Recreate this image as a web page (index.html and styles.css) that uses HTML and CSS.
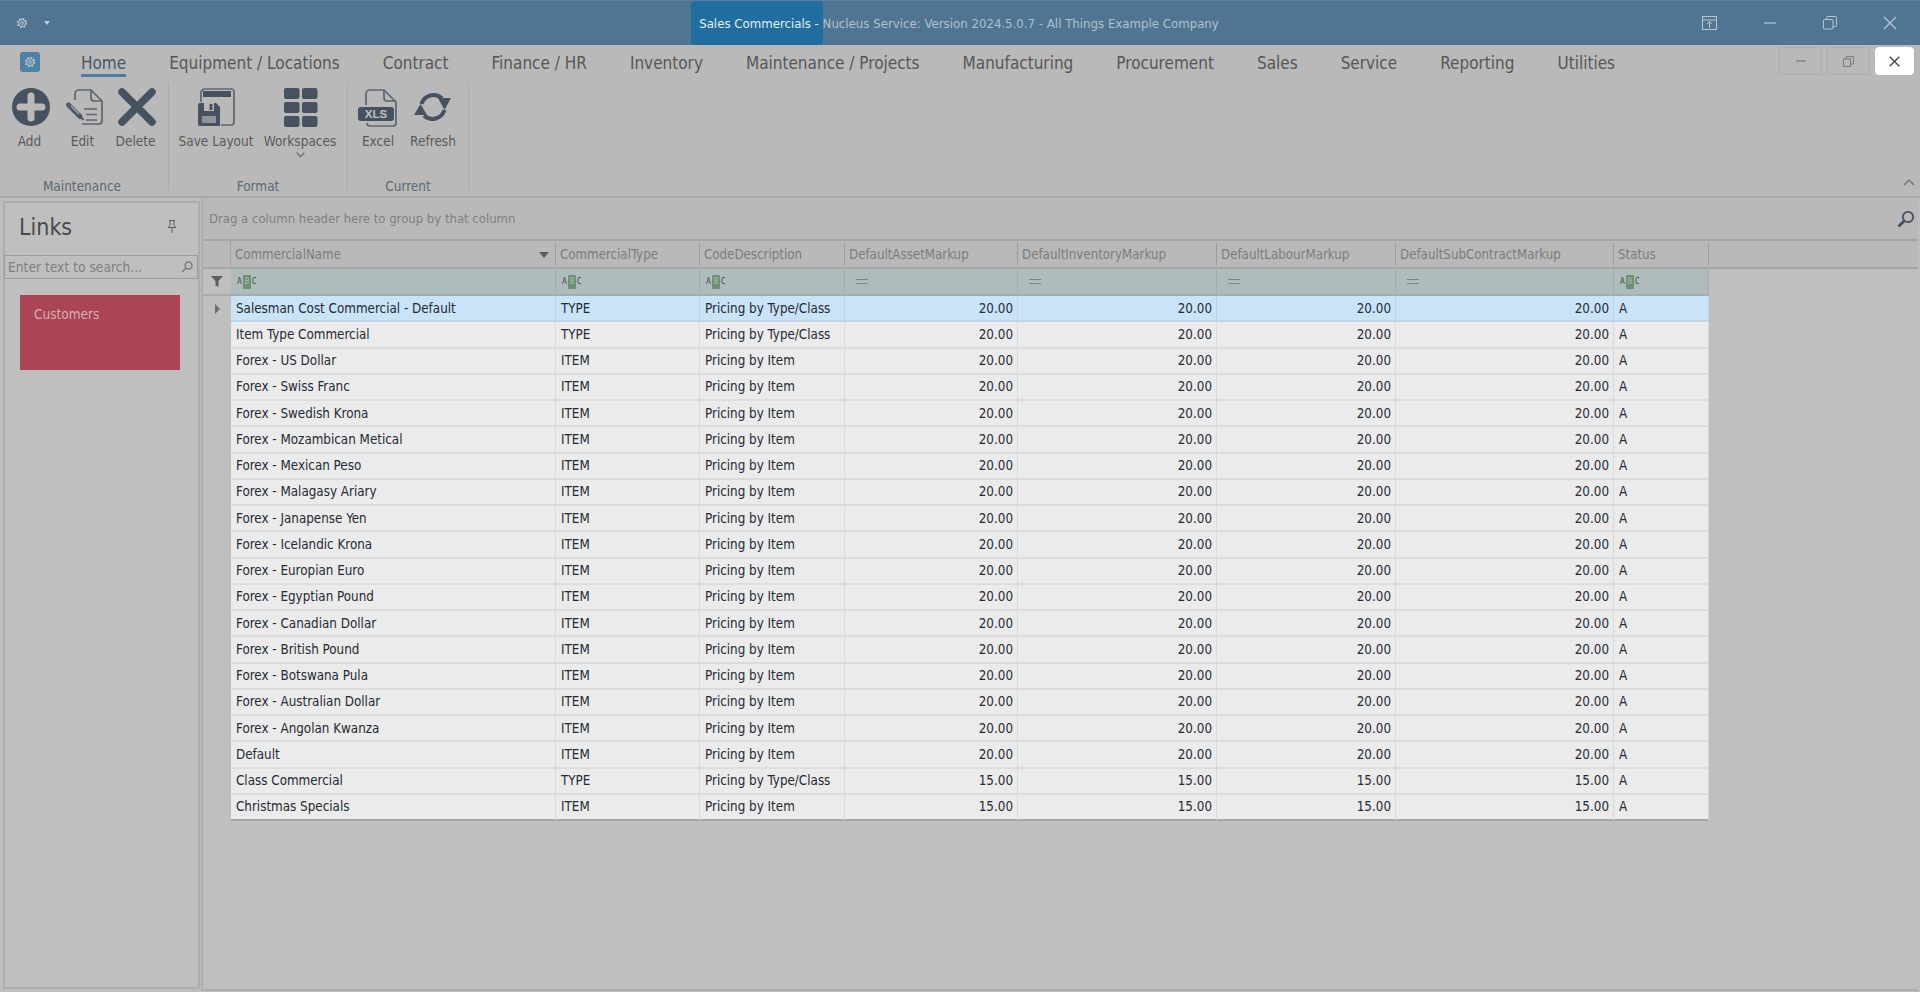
FILE: index.html
```html
<!DOCTYPE html>
<html lang="en">
<head>
<meta charset="utf-8">
<title>Sales Commercials</title>
<link rel="stylesheet" href="styles.css">
</head>
<body>
<svg class="defs" width="0" height="0" aria-hidden="true">
  <defs>
    <symbol id="gear" viewBox="0 0 20 20">
      <g fill="none" stroke="currentColor">
        <circle cx="10" cy="10" r="6.2" stroke-width="2.6" stroke-dasharray="2.4 2.46"/>
        <circle cx="10" cy="10" r="5" stroke-width="1.4"/>
        <circle cx="10" cy="10" r="2" stroke-width="1.4"/>
      </g>
    </symbol>
  </defs>
</svg>
<header class="titlebar">
  <div class="qat">
    <svg class="qat-gear"><use href="#gear"/></svg>
    <span class="qat-caret"></span>
  </div>
  <div class="title"><span class="title-active">Sales Commercials - </span><span class="title-rest">Nucleus Service: Version 2024.5.0.7 - All Things Example Company</span></div>
  <div class="winbtns">
    <span class="winbtn"><svg width="16" height="15" viewBox="0 0 16 15"><g fill="none" stroke="currentColor"><rect x=".5" y=".5" width="14" height="13"/><path d="M.5 4h14M7.5 12V6M5 8l2.5-2.5L10 8"/></g></svg></span>
    <span class="winbtn"><svg width="14" height="14" viewBox="0 0 14 14"><path d="M1 7h12" stroke="currentColor" fill="none" stroke-width="1.2"/></svg></span>
    <span class="winbtn"><svg width="14" height="14" viewBox="0 0 14 14"><g fill="none" stroke="currentColor"><rect x=".5" y="3.5" width="9.5" height="9.5" rx="1"/><path d="M3.5 3.5V1.5a1 1 0 0 1 1-1h8a1 1 0 0 1 1 1v8a1 1 0 0 1-1 1h-2.500"/></g></svg></span>
    <span class="winbtn"><svg width="14" height="14" viewBox="0 0 14 14"><path d="M1 1l12 12M13 1L1 13" stroke="currentColor" fill="none" stroke-width="1.2"/></svg></span>
  </div>
</header>

<section class="ribbon">
  <div class="tabrow">
    <span class="appicon"><svg class="app-gear"><use href="#gear"/></svg></span>
    <nav class="tabs">
      <span class="tab tab-on">Home</span>
      <span class="tab">Equipment / Locations</span>
      <span class="tab">Contract</span>
      <span class="tab">Finance / HR</span>
      <span class="tab">Inventory</span>
      <span class="tab">Maintenance / Projects</span>
      <span class="tab">Manufacturing</span>
      <span class="tab">Procurement</span>
      <span class="tab">Sales</span>
      <span class="tab">Service</span>
      <span class="tab">Reporting</span>
      <span class="tab">Utilities</span>
    </nav>
    <div class="mdi">
      <span class="mdibtn mdi-min"><svg width="10" height="2" viewBox="0 0 10 2"><path d="M0 1h10" stroke="currentColor" stroke-width="1.300"/></svg></span>
      <span class="mdibtn mdi-res"><svg width="11" height="11" viewBox="0 0 11 11"><g fill="none" stroke="currentColor"><rect x=".5" y="3" width="7" height="7.500"/><path d="M3 3V.5h7.500V8H7.500"/></g></svg></span>
      <span class="mdibtn mdi-close"><svg width="11" height="11" viewBox="0 0 11 11"><path d="M.7.700l9.600 9.600M10.300.700L.7 10.300" stroke="currentColor" fill="none" stroke-width="1.400"/></svg></span>
    </div>
  </div>
  <div class="groups">
    <div class="group g-maint">
      <div class="btns">
        <div class="rbtn b-std">
          <svg class="ico" viewBox="0 0 38 38"><circle cx="19" cy="19" r="19" fill="#46525f"/><path d="M19 8v22M8 19h22" stroke="#b9b9b9" stroke-width="7" stroke-linecap="round"/></svg>
          <span>Add</span>
        </div>
        <div class="rbtn b-std">
          <svg class="ico" viewBox="0 0 38 38"><g fill="none" stroke="#5c6670" stroke-width="1.700"><path d="M10 12V6a4 4 0 0 1 4-4h12l11 11v20a3 3 0 0 1-3 3H17"/><path d="M26 2v8a3 3 0 0 0 3 3h8"/><path d="M19 21h13M21 26.500h11M21 32h11" stroke-width="1.500"/></g><path d="M3.500 17L15 28.500" stroke="#4f5a65" stroke-width="5" stroke-linecap="round"/><path d="M6 18l8 8" stroke="#a5a9ad" stroke-width="1.200"/><path d="M15 28l3.500 4" stroke="#46525f" stroke-width="1.800"/></svg>
          <span>Edit</span>
        </div>
        <div class="rbtn b-std">
          <svg class="ico" viewBox="0 0 38 38"><path d="M4 4l30 30M34 4L4 34" stroke="#46525f" stroke-width="7.500" stroke-linecap="round"/></svg>
          <span>Delete</span>
        </div>
      </div>
      <div class="glabel">Maintenance</div>
    </div>
    <div class="group g-format">
      <div class="btns">
        <div class="rbtn b-save">
          <svg class="ico" viewBox="0 0 38 38"><g fill="none" stroke="#5c6670" stroke-width="1.700"><path d="M4 14V5a4 4 0 0 1 4-4h26a3 3 0 0 1 3 3v30a3 3 0 0 1-3 3H24"/></g><path d="M6 3h28v6H6z" fill="#46525f"/><path d="M1 17a2 2 0 0 1 2-2h16l4 4v18a1 1 0 0 1-1 1H3a2 2 0 0 1-2-2z" fill="#46525f"/><path d="M7 15h10v8H7z" fill="#b9b9b9"/><path d="M5 28h14v7H5z" fill="#8d949b"/><path d="M12.500 16h3v6h-3z" fill="#46525f"/></svg>
          <span>Save Layout</span>
        </div>
        <div class="rbtn b-work">
          <svg class="ico" viewBox="0 0 38 38"><g fill="#46525f"><rect x="3" y="0" width="15.500" height="11" rx="2"/><rect x="21" y="0" width="15.500" height="11" rx="2"/><rect x="3" y="14" width="15.500" height="11" rx="2"/><rect x="21" y="14" width="15.500" height="11" rx="2"/><rect x="3" y="28" width="15.500" height="11" rx="2"/><rect x="21" y="28" width="15.500" height="11" rx="2"/></g></svg>
          <span>Workspaces</span>
          <svg class="chev" width="9" height="6" viewBox="0 0 9 6"><path d="M.7.800L4.500 4.600 8.300.800" fill="none" stroke="#6b6f73" stroke-width="1.300"/></svg>
        </div>
      </div>
      <div class="glabel">Format</div>
    </div>
    <div class="group g-cur">
      <div class="btns">
        <div class="rbtn b-xls">
          <svg class="ico" viewBox="0 0 40 38"><g fill="none" stroke="#5c6670" stroke-width="1.700"><path d="M8 17V6a4 4 0 0 1 4-4h14l12 12v21a3 3 0 0 1-3 3H12a3 3 0 0 1-3-3"/><path d="M26 2v8a3 3 0 0 0 3 3h9"/></g><rect x="0" y="19" width="36" height="14" rx="3" fill="#46525f"/><text x="18" y="30" class="xls">XLS</text></svg>
          <span>Excel</span>
        </div>
        <div class="rbtn b-ref">
          <svg class="ico" viewBox="0 0 38 38"><g fill="none" stroke="#46525f" stroke-width="4"><path d="M7.500 16A12.500 12.500 0 0 1 28 10.500"/><path d="M30.500 22A12.500 12.500 0 0 1 10 27.500"/></g><g fill="#46525f"><path d="M24 10h13l-6.500 12z"/><path d="M0 27h13L6.500 16z"/></g></svg>
          <span>Refresh</span>
        </div>
      </div>
      <div class="glabel">Current</div>
    </div>
    <svg class="collapse" width="12" height="8" viewBox="0 0 12 8"><path d="M1 7l5-5 5 5" fill="none" stroke="#777" stroke-width="1.500"/></svg>
  </div>
</section>

<main class="workspace">
  <aside class="links">
    <div class="links-head">
      <span class="links-title">Links</span>
      <svg width="10" height="13" viewBox="0 0 10 13"><path d="M2 .5h6M3 .5v5L1 7.500h8L7 5.500v-5M5 7.500V13" fill="none" stroke="#5f5f5f"/></svg>
    </div>
    <div class="links-search">
      <span>Enter text to search...</span>
      <svg width="12" height="12" viewBox="0 0 12 12"><g fill="none" stroke="#777" stroke-width="1.300"><circle cx="7.500" cy="4.500" r="3.500"/><path d="M5 7l-4 4"/></g></svg>
    </div>
    <div class="tile">Customers</div>
  </aside>

  <section class="gridpanel">
    <div class="groupbar">
      <span>Drag a column header here to group by that column</span>
      <svg width="18" height="18" viewBox="0 0 18 18"><g fill="none" stroke="#46505a"><circle cx="11" cy="7" r="5.200" stroke-width="1.800"/><path d="M7 11l-5.500 5.500" stroke-width="2.800"/></g></svg>
    </div>
    <div class="cols headrow">
      <span class="ind"></span>
      <span class="hc hc-sort">CommercialName<i class="sort"></i></span>
      <span class="hc">CommercialType</span>
      <span class="hc">CodeDescription</span>
      <span class="hc">DefaultAssetMarkup</span>
      <span class="hc">DefaultInventoryMarkup</span>
      <span class="hc">DefaultLabourMarkup</span>
      <span class="hc">DefaultSubContractMarkup</span>
      <span class="hc">Status</span>
    </div>
    <div class="cols filterrow">
      <span class="ind"><svg width="12" height="11" viewBox="0 0 12 11"><path d="M0 0h12L7.500 5v6l-3-1.500V5z" fill="#5c5f62"/></svg></span>
      <span class="fc"><span class="abc">A<b>B</b>C</span></span>
      <span class="fc"><span class="abc">A<b>B</b>C</span></span>
      <span class="fc"><span class="abc">A<b>B</b>C</span></span>
      <span class="fc"><i class="eq"></i></span>
      <span class="fc"><i class="eq"></i></span>
      <span class="fc"><i class="eq"></i></span>
      <span class="fc"><i class="eq"></i></span>
      <span class="fc"><span class="abc">A<b>B</b>C</span></span>
    </div>
    <div class="rows">
      <div class="cols row row-sel"><span class="ind"><i class="arrow"></i></span><span class="c">Salesman Cost Commercial - Default</span><span class="c">TYPE</span><span class="c">Pricing by Type/Class</span><span class="c n">20.00</span><span class="c n">20.00</span><span class="c n">20.00</span><span class="c n">20.00</span><span class="c">A</span></div>
      <div class="cols row"><span class="ind"></span><span class="c">Item Type Commercial</span><span class="c">TYPE</span><span class="c">Pricing by Type/Class</span><span class="c n">20.00</span><span class="c n">20.00</span><span class="c n">20.00</span><span class="c n">20.00</span><span class="c">A</span></div>
      <div class="cols row"><span class="ind"></span><span class="c">Forex - US Dollar</span><span class="c">ITEM</span><span class="c">Pricing by Item</span><span class="c n">20.00</span><span class="c n">20.00</span><span class="c n">20.00</span><span class="c n">20.00</span><span class="c">A</span></div>
      <div class="cols row"><span class="ind"></span><span class="c">Forex - Swiss Franc</span><span class="c">ITEM</span><span class="c">Pricing by Item</span><span class="c n">20.00</span><span class="c n">20.00</span><span class="c n">20.00</span><span class="c n">20.00</span><span class="c">A</span></div>
      <div class="cols row"><span class="ind"></span><span class="c">Forex - Swedish Krona</span><span class="c">ITEM</span><span class="c">Pricing by Item</span><span class="c n">20.00</span><span class="c n">20.00</span><span class="c n">20.00</span><span class="c n">20.00</span><span class="c">A</span></div>
      <div class="cols row"><span class="ind"></span><span class="c">Forex - Mozambican Metical</span><span class="c">ITEM</span><span class="c">Pricing by Item</span><span class="c n">20.00</span><span class="c n">20.00</span><span class="c n">20.00</span><span class="c n">20.00</span><span class="c">A</span></div>
      <div class="cols row"><span class="ind"></span><span class="c">Forex - Mexican Peso</span><span class="c">ITEM</span><span class="c">Pricing by Item</span><span class="c n">20.00</span><span class="c n">20.00</span><span class="c n">20.00</span><span class="c n">20.00</span><span class="c">A</span></div>
      <div class="cols row"><span class="ind"></span><span class="c">Forex - Malagasy Ariary</span><span class="c">ITEM</span><span class="c">Pricing by Item</span><span class="c n">20.00</span><span class="c n">20.00</span><span class="c n">20.00</span><span class="c n">20.00</span><span class="c">A</span></div>
      <div class="cols row"><span class="ind"></span><span class="c">Forex - Janapense Yen</span><span class="c">ITEM</span><span class="c">Pricing by Item</span><span class="c n">20.00</span><span class="c n">20.00</span><span class="c n">20.00</span><span class="c n">20.00</span><span class="c">A</span></div>
      <div class="cols row"><span class="ind"></span><span class="c">Forex - Icelandic Krona</span><span class="c">ITEM</span><span class="c">Pricing by Item</span><span class="c n">20.00</span><span class="c n">20.00</span><span class="c n">20.00</span><span class="c n">20.00</span><span class="c">A</span></div>
      <div class="cols row"><span class="ind"></span><span class="c">Forex - Europian Euro</span><span class="c">ITEM</span><span class="c">Pricing by Item</span><span class="c n">20.00</span><span class="c n">20.00</span><span class="c n">20.00</span><span class="c n">20.00</span><span class="c">A</span></div>
      <div class="cols row"><span class="ind"></span><span class="c">Forex - Egyptian Pound</span><span class="c">ITEM</span><span class="c">Pricing by Item</span><span class="c n">20.00</span><span class="c n">20.00</span><span class="c n">20.00</span><span class="c n">20.00</span><span class="c">A</span></div>
      <div class="cols row"><span class="ind"></span><span class="c">Forex - Canadian Dollar</span><span class="c">ITEM</span><span class="c">Pricing by Item</span><span class="c n">20.00</span><span class="c n">20.00</span><span class="c n">20.00</span><span class="c n">20.00</span><span class="c">A</span></div>
      <div class="cols row"><span class="ind"></span><span class="c">Forex - British Pound</span><span class="c">ITEM</span><span class="c">Pricing by Item</span><span class="c n">20.00</span><span class="c n">20.00</span><span class="c n">20.00</span><span class="c n">20.00</span><span class="c">A</span></div>
      <div class="cols row"><span class="ind"></span><span class="c">Forex - Botswana Pula</span><span class="c">ITEM</span><span class="c">Pricing by Item</span><span class="c n">20.00</span><span class="c n">20.00</span><span class="c n">20.00</span><span class="c n">20.00</span><span class="c">A</span></div>
      <div class="cols row"><span class="ind"></span><span class="c">Forex - Australian Dollar</span><span class="c">ITEM</span><span class="c">Pricing by Item</span><span class="c n">20.00</span><span class="c n">20.00</span><span class="c n">20.00</span><span class="c n">20.00</span><span class="c">A</span></div>
      <div class="cols row"><span class="ind"></span><span class="c">Forex - Angolan Kwanza</span><span class="c">ITEM</span><span class="c">Pricing by Item</span><span class="c n">20.00</span><span class="c n">20.00</span><span class="c n">20.00</span><span class="c n">20.00</span><span class="c">A</span></div>
      <div class="cols row"><span class="ind"></span><span class="c">Default</span><span class="c">ITEM</span><span class="c">Pricing by Item</span><span class="c n">20.00</span><span class="c n">20.00</span><span class="c n">20.00</span><span class="c n">20.00</span><span class="c">A</span></div>
      <div class="cols row"><span class="ind"></span><span class="c">Class Commercial</span><span class="c">TYPE</span><span class="c">Pricing by Type/Class</span><span class="c n">15.00</span><span class="c n">15.00</span><span class="c n">15.00</span><span class="c n">15.00</span><span class="c">A</span></div>
      <div class="cols row"><span class="ind"></span><span class="c">Christmas Specials</span><span class="c">ITEM</span><span class="c">Pricing by Item</span><span class="c n">15.00</span><span class="c n">15.00</span><span class="c n">15.00</span><span class="c n">15.00</span><span class="c">A</span></div>
    </div>
  </section>
</main>
</body>
</html>
```

FILE: styles.css
```css
* { box-sizing: border-box; }
html, body { margin: 0; height: 100%; }
body {
  display: flex;
  flex-direction: column;
  width: 1920px;
  height: 992px;
  overflow: hidden;
  background: #bebebe;
  font-family: "DejaVu Sans Condensed", "Open Sans", sans-serif;
  font-size: 14px;
  color: #3c3c3c;
}
.defs { position: absolute; }

/* Title bar */
.titlebar {
  flex: 0 0 45px;
  display: grid;
  grid-template-columns: 1fr auto 1fr;
  align-items: stretch;
  background: #4f7592;
  border-top: 1px solid #5e7f99;
}
.qat { display: flex; align-items: center; gap: 15px; padding-left: 15px; color: #b9c4cc; }
.qat-gear { width: 14px; height: 14px; }
.qat-caret { width: 0; height: 0; border: 3.500px solid transparent; border-top: 4px solid #c4ced6; border-bottom: 0; }
.title { display: flex; align-items: stretch; margin-right: 10px; font-size: 13.100px; white-space: nowrap; }
.title-active {
  display: flex;
  align-items: center;
  padding-left: 8px;
  white-space: pre;
  background: #1f6e9f;
  border-radius: 4px;
  color: #e4edf4;
}
.title-rest { display: flex; align-items: center; color: #b3c0ca; }
.winbtns { display: flex; justify-content: flex-end; color: #bcc6ce; }
.winbtn { width: 60px; display: flex; align-items: center; justify-content: center; }

/* Ribbon */
.ribbon {
  flex: 0 0 153px;
  display: flex;
  flex-direction: column;
  background: #b9b9b9;
  border-bottom: 2px solid #a9a9a9;
}
.tabrow { flex: 0 0 38px; display: flex; padding-right: 6px; }
.appicon {
  flex: none;
  width: 20px;
  height: 20px;
  margin: 7px 0 0 20px;
  border-radius: 3px;
  background: #4d82a5;
  color: #b5c6d2;
  display: flex;
  align-items: center;
  justify-content: center;
}
.app-gear { width: 14px; height: 14px; }
.tabs { display: flex; gap: 43px; padding-left: 41px; }
.tab { font-size: 17px; line-height: 20px; padding-top: 8px; height: 32px; color: #575757; white-space: nowrap; }
.tab-on { color: #44586b; border-bottom: 3px solid #4f7c9c; }
.mdi { margin-left: auto; display: flex; gap: 5px; padding-top: 2px; }
.mdibtn {
  height: 28px;
  width: 43px;
  display: flex;
  align-items: center;
  justify-content: center;
  border: 1px solid #adadad;
  border-radius: 2px;
  color: #7d7d7d;
}
.mdi-close { width: 39px; background: #fff; border-color: #fff; border-radius: 4px; color: #454545; }
.groups { flex: 1; display: flex; position: relative; }
.group {
  display: flex;
  flex-direction: column;
  height: 108px;
  border-right: 1px solid #acacac;
}
.g-maint { width: 169px; }
.g-format { width: 179px; }
.g-cur { width: 121px; }
.btns { flex: 1; display: flex; }
.g-maint .btns { gap: 15px; padding-left: 12px; }
.g-format .btns { gap: 9px; padding-left: 9px; }
.g-cur .btns { gap: 11px; padding-left: 10px; }
.rbtn {
  display: flex;
  flex-direction: column;
  align-items: center;
  padding-top: 5px;
  font-size: 13.500px;
  line-height: 16px;
  color: #5a5a5a;
  white-space: nowrap;
}
.b-std { width: 38px; }
.b-std span { padding-right: 3px; }
.b-save { width: 76px; }
.b-work { width: 74px; }
.b-xls { width: 40px; }
.b-ref { width: 48px; }
.ico { width: 38px; height: 38px; margin-bottom: 7px; flex: none; overflow: visible; }
.b-xls .ico { width: 40px; }
.chev { margin-top: 3px; }
.xls { font-family: "Liberation Sans", sans-serif; font-weight: 700; font-size: 11.500px; fill: #c2c2c2; text-anchor: middle; }
.glabel { height: 16px; margin-bottom: -3px; line-height: 16px; text-align: center; font-size: 13.500px; color: #5d6873; }
.g-maint .glabel { padding-right: 4px; }
.collapse { position: absolute; right: 5px; bottom: 10px; }

/* Workspace */
.workspace { flex: 1; min-height: 0; display: flex; gap: 1px; padding: 0 2px 1px 3px; }
.links {
  flex: 0 0 196px;
  margin: 3px 0 2px;
  border: 2px solid #adadad;
  background: #bfbfbf;
  display: flex;
  flex-direction: column;
}
.links-head { display: flex; align-items: center; justify-content: space-between; padding: 0 21px 5px 14px; height: 52px; }
.links-title { font-size: 23px; color: #4a4a4a; }
.links-search {
  height: 24px;
  margin: 0 0 16px -1px;
  width: 194px;
  display: flex;
  align-items: center;
  justify-content: space-between;
  padding: 0 4px 0 3px;
  border: 1px solid #9e9e9e;
  color: #808080;
  font-size: 13.700px;
}
.tile {
  width: 160px;
  height: 75px;
  margin-left: 15px;
  padding: 11px 14px;
  background: #a94554;
  color: #d8aeb4;
  font-size: 13.500px;
}
.gridpanel { flex: 1; min-width: 0; border: 2px solid #adadad; border-width: 0 0 2px 2px; background: #bfbfbf; }
.groupbar {
  height: 43px;
  display: flex;
  align-items: center;
  justify-content: space-between;
  padding: 0 3px 0 6px;
  background: #b9b9b9;
  border-bottom: 2px solid #a6a6a6;
  color: #7f7f7f;
  font-size: 13px;
}
.cols { display: grid; grid-template-columns: 28px 325px 144px 145px 173px 199px 179px 218px 95px; }
.ind { display: flex; align-items: center; justify-content: center; }
.headrow { height: 28px; background: #b9b9b9; border-bottom: 2px solid #a6a6a6; }
.headrow .ind { border-right: 1px solid #a6a6a6; }
.hc {
  position: relative;
  display: flex;
  align-items: center;
  padding-left: 4px;
  font-size: 13.200px;
  color: #7c7c7c;
  margin: 2px 0;
  border-right: 1px solid #9d9d9d;
}
.sort { position: absolute; right: 6px; top: 9px; border: 5.500px solid transparent; border-top: 6px solid #5c5c5c; border-bottom: 0; }
.filterrow { height: 27px; background: #aebdbc; border-bottom: 2px solid #a5adad; width: 1506px; }
.filterrow .ind { background: #bfbfbf; }
.fc { display: flex; align-items: center; padding-left: 6px; border-right: 1px solid #a2adac; }
.abc { display: flex; align-items: center; font-family: "DejaVu Sans Mono", monospace; font-size: 8px; line-height: 14px; color: #3e4a4a; }
.abc b { width: 8px; height: 14px; margin: 0 1px; background: #6f9077; color: #a5bda9; font-weight: 400; text-align: center; border-radius: 1px; }
.eq { display: block; margin-left: 5px; width: 12px; height: 5px; border: solid #7c8686; border-width: 1.500px 0; }
.rows { display: flex; flex-direction: column; }
.row { height: 26.250px; color: #252a33; font-size: 13.300px; }
.row .ind { background: #bfbfbf; }
.arrow { width: 0; height: 0; border: 5px solid transparent; border-left: 5px solid #6e6e6e; border-right: 0; }
.c {
  display: flex;
  align-items: center;
  padding: 0 4px 0 5px;
  background: #ebebeb;
  border-right: 1px solid #dadada;
  border-bottom: 2px solid #dcdcdc;
  white-space: nowrap;
}
.n { justify-content: flex-end; }
.row-sel .c { background: #c9e3f8; border-color: #bfd4e4; }
.row-sel .c:nth-child(2) { border-top-left-radius: 2px; }
.row:last-child .c { border-bottom-color: #a8a8a8; }
```
